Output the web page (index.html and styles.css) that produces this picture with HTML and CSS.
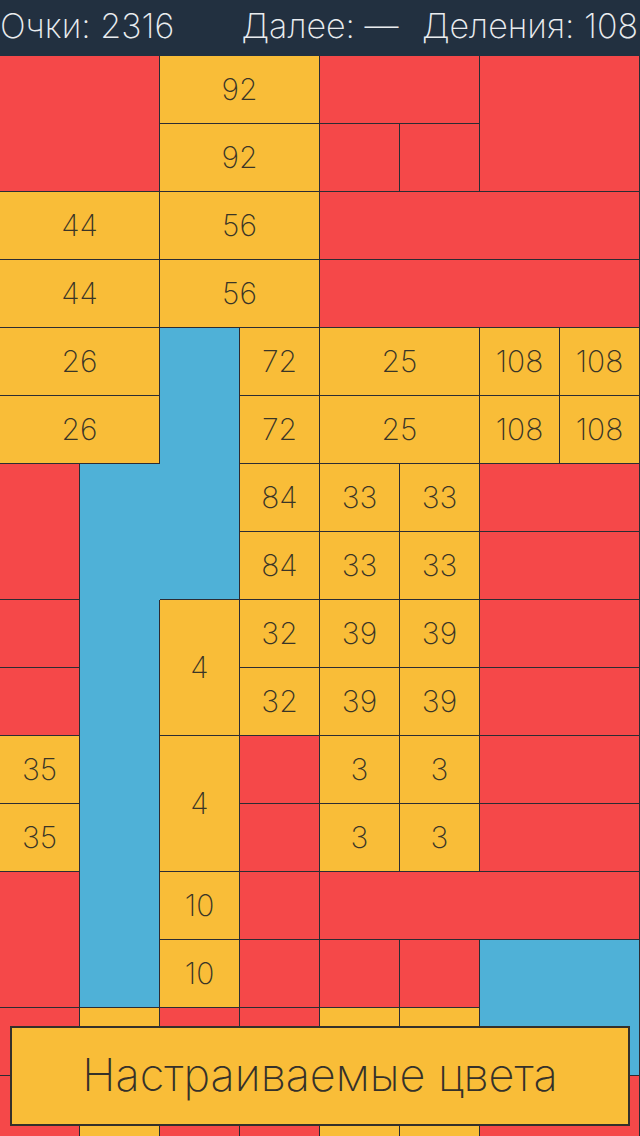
FILE: index.html
```html
<!DOCTYPE html>
<html lang="ru">
<head>
<meta charset="utf-8">
<title>Деления</title>
<link rel="stylesheet" href="styles.css">
</head>
<body>
<div class="screen">
  <header class="topbar">
    <span class="stat stat-left">Очки: 2316</span>
    <span class="stat stat-mid">Далее: —</span>
    <span class="stat stat-right">Деления: 108</span>
  </header>

  <main class="board">
    <!-- row 1 -->
    <div class="cell red w2 h2"></div>
    <div class="cell yel w2">92</div>
    <div class="cell red w2"></div>
    <div class="cell red w2 h2"></div>
    <!-- row 2 -->
    <div class="cell yel w2">92</div>
    <div class="cell red"></div>
    <div class="cell red"></div>
    <!-- row 3 -->
    <div class="cell yel w2">44</div>
    <div class="cell yel w2">56</div>
    <div class="cell red w4"></div>
    <!-- row 4 -->
    <div class="cell yel w2">44</div>
    <div class="cell yel w2">56</div>
    <div class="cell red w4"></div>
    <!-- row 5 -->
    <div class="cell yel w2">26</div>
    <div class="cell blue h4"></div>
    <div class="cell yel">72</div>
    <div class="cell yel w2">25</div>
    <div class="cell yel">108</div>
    <div class="cell yel">108</div>
    <!-- row 6 -->
    <div class="cell yel w2">26</div>
    <div class="cell yel">72</div>
    <div class="cell yel w2">25</div>
    <div class="cell yel">108</div>
    <div class="cell yel">108</div>
    <!-- row 7 -->
    <div class="cell red h2"></div>
    <div class="cell blue h2 open"></div>
    <div class="cell yel">84</div>
    <div class="cell yel">33</div>
    <div class="cell yel">33</div>
    <div class="cell red w2"></div>
    <!-- row 8 -->
    <div class="cell yel">84</div>
    <div class="cell yel">33</div>
    <div class="cell yel">33</div>
    <div class="cell red w2"></div>
    <!-- row 9 -->
    <div class="cell red"></div>
    <div class="cell blue h6"></div>
    <div class="cell yel h2">4</div>
    <div class="cell yel">32</div>
    <div class="cell yel">39</div>
    <div class="cell yel">39</div>
    <div class="cell red w2"></div>
    <!-- row 10 -->
    <div class="cell red"></div>
    <div class="cell yel">32</div>
    <div class="cell yel">39</div>
    <div class="cell yel">39</div>
    <div class="cell red w2"></div>
    <!-- row 11 -->
    <div class="cell yel">35</div>
    <div class="cell yel h2">4</div>
    <div class="cell red"></div>
    <div class="cell yel">3</div>
    <div class="cell yel">3</div>
    <div class="cell red w2"></div>
    <!-- row 12 -->
    <div class="cell yel">35</div>
    <div class="cell red"></div>
    <div class="cell yel">3</div>
    <div class="cell yel">3</div>
    <div class="cell red w2"></div>
    <!-- row 13 -->
    <div class="cell red h2"></div>
    <div class="cell yel">10</div>
    <div class="cell red"></div>
    <div class="cell red w4"></div>
    <!-- row 14 -->
    <div class="cell yel">10</div>
    <div class="cell red"></div>
    <div class="cell red"></div>
    <div class="cell red"></div>
    <div class="cell blue w2 h2"></div>
    <!-- row 15 -->
    <div class="cell red"></div>
    <div class="cell yel"></div>
    <div class="cell red"></div>
    <div class="cell red"></div>
    <div class="cell yel"></div>
    <div class="cell yel"></div>
    <!-- row 16 -->
    <div class="cell red"></div>
    <div class="cell yel"></div>
    <div class="cell red"></div>
    <div class="cell red"></div>
    <div class="cell yel"></div>
    <div class="cell yel"></div>
    <div class="cell red w2"></div>
  </main>

  <button class="banner" type="button">Настраиваемые цвета</button>
</div>
</body>
</html>
```

FILE: styles.css
```css
html, body {
  margin: 0;
  padding: 0;
  background: #223040;
}

.screen {
  position: relative;
  width: 640px;
  height: 1136px;
  overflow: hidden;
  font-family: Inter, Roboto, "Liberation Sans", sans-serif;
  font-weight: 200;
}

/* score bar */
.topbar {
  height: 56px;
  background: #223040;
  color: #e9ecef;
  display: grid;
  grid-template-columns: 1fr auto 1fr;
  align-items: center;
  font-size: 34px;
  line-height: 1;
  padding-bottom: 4px;
  box-sizing: border-box;
}

.stat-left { justify-self: start; }
.stat-mid { justify-self: center; }
.stat-right { justify-self: end; padding-right: 2px; }

/* playing field: 8 columns of 80px, rows of 68px */
.board {
  display: grid;
  grid-template-columns: repeat(8, 80px);
  grid-auto-rows: 68px;
  border-left: 1px solid #2c2c33;
  margin-left: -1px;
}

.cell {
  box-sizing: border-box;
  border-right: 1px solid #2c2c33;
  border-bottom: 1px solid #2c2c33;
  display: flex;
  align-items: center;
  justify-content: center;
  font-size: 30px;
  color: #3a3527;
  padding-bottom: 2px;
}

.w2 { grid-column: span 2; }
.w4 { grid-column: span 4; }
.h2 { grid-row: span 2; }
.h4 { grid-row: span 4; }
.h6 { grid-row: span 6; }

.red { background: #f54849; }
.yel { background: #f9bd38; }
.blue { background: #4fb1d7; }

/* inner part of the water channel runs into its neighbours without seams */
.blue.open {
  border-right: none;
  border-bottom: none;
}

/* floating banner at the bottom */
.banner {
  position: absolute;
  left: 10px;
  right: 10px;
  bottom: 10px;
  height: 100px;
  background: #f9bd38;
  border: 2px solid #34302a;
  font-family: Inter, Roboto, "Liberation Sans", sans-serif;
  font-weight: 200;
  font-size: 45px;
  color: #35312a;
  padding: 0 0 4px;
  cursor: pointer;
}
```
